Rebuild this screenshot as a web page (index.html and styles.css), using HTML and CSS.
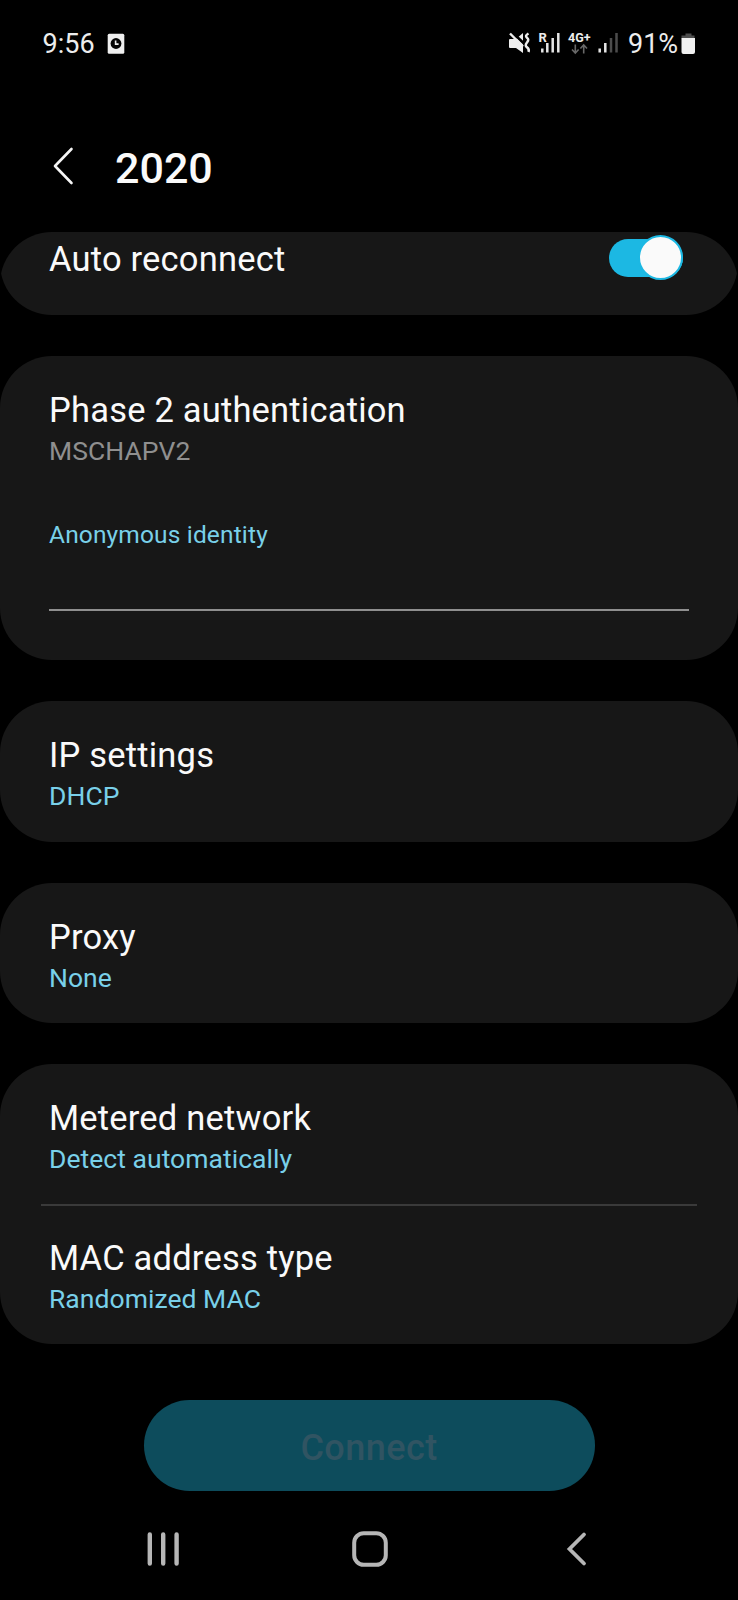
FILE: index.html
```html
<!DOCTYPE html>
<html lang="en">
<head>
<meta charset="utf-8">
<title>2020</title>
<link rel="stylesheet" href="styles.css">
</head>
<body>
<div class="screen">
  <div class="status">
    <span class="clock">9:56</span>
    <svg class="alarm" width="18" height="22" viewBox="0 0 18 22"><rect x="0.7" y="0.7" width="16.6" height="20" rx="1.5" fill="#efefef"/><circle cx="9" cy="10.500" r="5.4" fill="#050505"/><path d="M8.6 7.500v3.6h3" fill="none" stroke="#efefef" stroke-width="1.6"/></svg>
    <svg class="signals" width="120" height="30" viewBox="0 0 120 30">
      <path d="M2 10h6l7-6v20l-7-5H2a1 1 0 0 1-1-1v-7a1 1 0 0 1 1-1z" fill="#ededed"/>
      <path d="M3.500 2.500L17 15.500" stroke="#000" stroke-width="2.600"/>
      <path d="M2 4.500L15 17.500" stroke="#ededed" stroke-width="2.400"/>
      <path d="M20.500 4.500q-4 2.300-1.500 4.200t0 4.800t0 4.800t1.500 4.700" fill="none" stroke="#ededed" stroke-width="2.500"/>
      <text class="net-r" x="30.500" y="13">R</text>
      <path d="M34.300 19.500v4M39.300 14v9.500M44.700 9v14.500M50.300 4v19.500" stroke="#e6e6e6" stroke-width="2.500" fill="none"/>
      <text class="net-g" x="60" y="13">4G+</text>
      <path d="M67.300 15.500v8.500M64 20.500l3.300 3.500 3.300-3.500M75.700 24.500v-8.500M72.400 19.500l3.300-3.500 3.300 3.500" stroke="#686868" stroke-width="1.600" fill="none"/>
      <path d="M91.700 19.500v4M97.300 14v9.500" stroke="#e6e6e6" stroke-width="2.500" fill="none"/>
      <path d="M103 9v14.500M108.500 4v19.500" stroke="#4c4c4c" stroke-width="2.500" fill="none"/>
    </svg>
    <span class="percent">91%</span>
    <svg class="battery" width="15" height="24" viewBox="0 0 15 24"><path d="M4.500 1.500h6v2h3v3h-13v-3h4z" fill="#4c4c4c"/><path d="M0.500 6h13.500v14a2 2 0 0 1-2 2H2.500a2 2 0 0 1-2-2z" fill="#f0f0f0"/></svg>
  </div>

  <header class="header">
    <svg width="24" height="42" viewBox="0 0 24 42"><path d="M20.500 4L4 21 20.500 38" fill="none" stroke="#f5f5f5" stroke-width="2.600" stroke-linecap="round" stroke-linejoin="round"/></svg>
    <h1 class="heading">2020</h1>
  </header>

  <main class="list">
    <section class="clip-top"><div class="clip-bottom">
      <span class="title t-auto">Auto reconnect</span>
      <span class="switch"><span class="thumb"></span></span>
    </div></section>

    <section class="card tall">
      <div class="title">Phase 2 authentication</div>
      <div class="sub muted">MSCHAPV2</div>
      <div class="field">Anonymous identity</div>
    </section>

    <section class="card">
      <div class="title">IP settings</div>
      <div class="sub">DHCP</div>
    </section>

    <section class="card">
      <div class="title">Proxy</div>
      <div class="sub">None</div>
    </section>

    <section class="card pair">
      <div class="row">
        <div class="title">Metered network</div>
        <div class="sub">Detect automatically</div>
      </div>
      <div class="row second">
        <div class="title">MAC address type</div>
        <div class="sub">Randomized MAC</div>
      </div>
    </section>
  </main>

  <button class="connect">Connect</button>

  <nav class="nav">
    <svg width="36" height="38" viewBox="0 0 36 38"><path d="M4.800 4.500v29M18.200 4.500v29M31.600 4.500v29" stroke="#b6b6b6" stroke-width="4.400" stroke-linecap="round"/></svg>
    <svg class="home" width="38" height="38" viewBox="0 0 38 38"><rect x="3.200" y="3.200" width="31.600" height="31.600" rx="9.500" fill="none" stroke="#b6b6b6" stroke-width="4"/></svg>
    <svg width="24" height="38" viewBox="0 0 24 38"><path d="M19 4.500L4.500 19 19 33.500" fill="none" stroke="#b6b6b6" stroke-width="3.800" stroke-linecap="round"/></svg>
  </nav>
</div>
</body>
</html>
```
FILE: styles.css
```css
* { box-sizing: border-box; }
body {
  margin: 0;
  background: #000;
  font-family: Roboto, "Liberation Sans", sans-serif;
}
.screen {
  width: 738px;
  height: 1600px;
  overflow: hidden;
  display: flex;
  flex-direction: column;
}
svg { display: block; flex: none; }

.status {
  height: 86px;
  padding: 1px 42px 0 42.500px;
  display: flex;
  align-items: center;
  color: #ededed;
}
.clock, .percent { font-size: 27px; line-height: 32px; padding-top: 1px; white-space: nowrap; }
.clock { width: 51px; }
.alarm { margin-left: 13.500px; }
.signals { margin-left: auto; }
.percent { width: 49px; }
.battery { margin-left: 4px; }
.net-r { font-size: 13px; font-weight: 700; fill: #ededed; }
.net-g { font-size: 12.500px; font-weight: 700; fill: #ededed; }

.header {
  height: 146px;
  padding: 59px 0 0 51px;
  display: flex;
  gap: 40px;
}
.heading {
  margin: 0;
  font-size: 43px;
  line-height: 46px;
  font-weight: 500;
  color: #fafafa;
}

.list { display: flex; flex-direction: column; }
.clip-top {
  height: 83px;
  border-radius: 52px 52px 0 0;
  overflow: hidden;
}
.clip-bottom {
  height: 100%;
  border-radius: 0 0 52px 52px;
  background: #171717;
  padding: 6.500px 55.500px 0 49px;
  display: flex;
  justify-content: space-between;
  align-items: flex-start;
}
.switch {
  width: 74px;
  height: 38.500px;
  border-radius: 20px;
  background: #1cb8e3;
  display: flex;
  justify-content: flex-end;
  align-items: center;
}
.thumb {
  flex: none;
  width: 45px;
  height: 45px;
  border-radius: 50%;
  background: #fafafa;
  border: 2px solid #1cb8e3;
}

.card {
  height: 140.500px;
  margin-top: 41px;
  border-radius: 52px;
  background: #171717;
  padding: 34px 49px 0;
}
.title {
  font-size: 34.500px;
  line-height: 40px;
  letter-spacing: 0.2px;
  color: #fafafa;
  white-space: nowrap;
}
.t-auto { margin-top: 0.500px; }
.sub {
  margin-top: 5px;
  font-size: 26.500px;
  line-height: 32px;
  letter-spacing: 0.04px;
  color: #79d0e9;
  white-space: nowrap;
}
.muted { color: #8f8f8f; }
.tall { height: 304px; }
.field {
  margin-top: 53px;
  height: 91px;
  font-size: 24.500px;
  line-height: 30px;
  letter-spacing: 0.15px;
  color: #79d0e9;
  border-bottom: 2px solid #8f8f8f;
}
.pair { height: 280px; padding: 0 41px; }
.row { height: 140px; padding: 34px 8px 0; }
.second { border-top: 2px solid #3a3a3a; padding-top: 32px; }

.connect {
  width: 451px;
  height: 90.500px;
  margin: 56px 0 0 143.500px;
  padding: 5px 0 0;
  border: 0;
  border-radius: 46px;
  background: #0d4c5c;
  color: #305462;
  font-family: inherit;
  font-size: 36px;
  line-height: 42px;
  letter-spacing: 0.45px;
  font-weight: 500;
}
.nav {
  margin-top: 39.500px;
  padding: 0 149.500px 0 144.500px;
  display: flex;
}
.home { margin: 0 auto 0 170px; }
```
